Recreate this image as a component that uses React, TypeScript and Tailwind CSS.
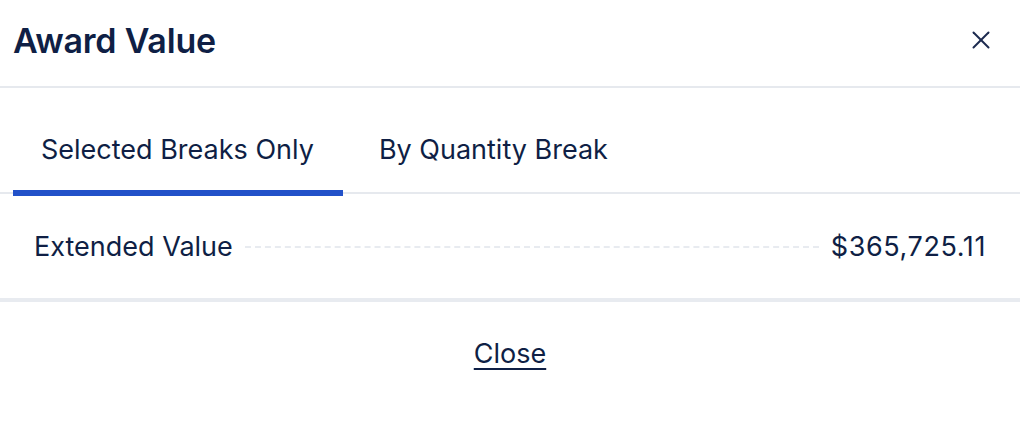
import { FC, useState } from 'react'
import { X } from 'lucide-react'

const tabs = ['Selected Breaks Only', 'By Quantity Break']

const App: FC = () => {
  const [active, setActive] = useState(0)

  return (
    <div
      className="w-[1020px] h-[442px] bg-white text-[#0f1f45] overflow-hidden"
      style={{ fontFamily: 'Inter, "Noto Sans", sans-serif' }}
    >
      {/* header */}
      <div className="flex items-center justify-between h-[88px] border-b-2 border-[#e6e9ee] pl-[13px] pr-[24px] pb-[6px]">
        <h1 className="text-[34px] font-semibold tracking-[-0.2px]">Award Value</h1>
        <button className="text-[#1c2a4f]">
          <X size={30} strokeWidth={1.6} />
        </button>
      </div>

      {/* tabs */}
      <div className="flex pt-5 pl-[13px] border-b-2 border-[#e6e9ee]">
        {tabs.map((t, i) => (
          <button
            key={t}
            onClick={() => setActive(i)}
            className={
              'relative h-[84px] text-[27px] ' +
              (i === 0 ? 'pl-[28px] pr-[29px]' : 'pl-[36px] pr-[28px]')
            }
          >
            {t}
            {active === i && (
              <span className="absolute left-0 right-0 -bottom-[4px] h-[6px] bg-[#2251c9]" />
            )}
          </button>
        ))}
      </div>

      {/* value row */}
      <div className="flex items-center h-[108px] pt-[3px] px-[34px] border-b-4 border-[#e8ebf0] text-[27px]">
        <span>Extended Value</span>
        <div className="flex-1 mx-[12px] border-t-2 border-dashed border-[#e8ebf0] -mt-[1px]" />
        <span className="tracking-[0.6px]">$365,725.11</span>
      </div>

      {/* footer */}
      <div className="flex justify-center pt-[36px]">
        <button className="text-[27px] leading-[32px] underline underline-offset-[5px] decoration-2">
          Close
        </button>
      </div>
    </div>
  )
}

export default App
